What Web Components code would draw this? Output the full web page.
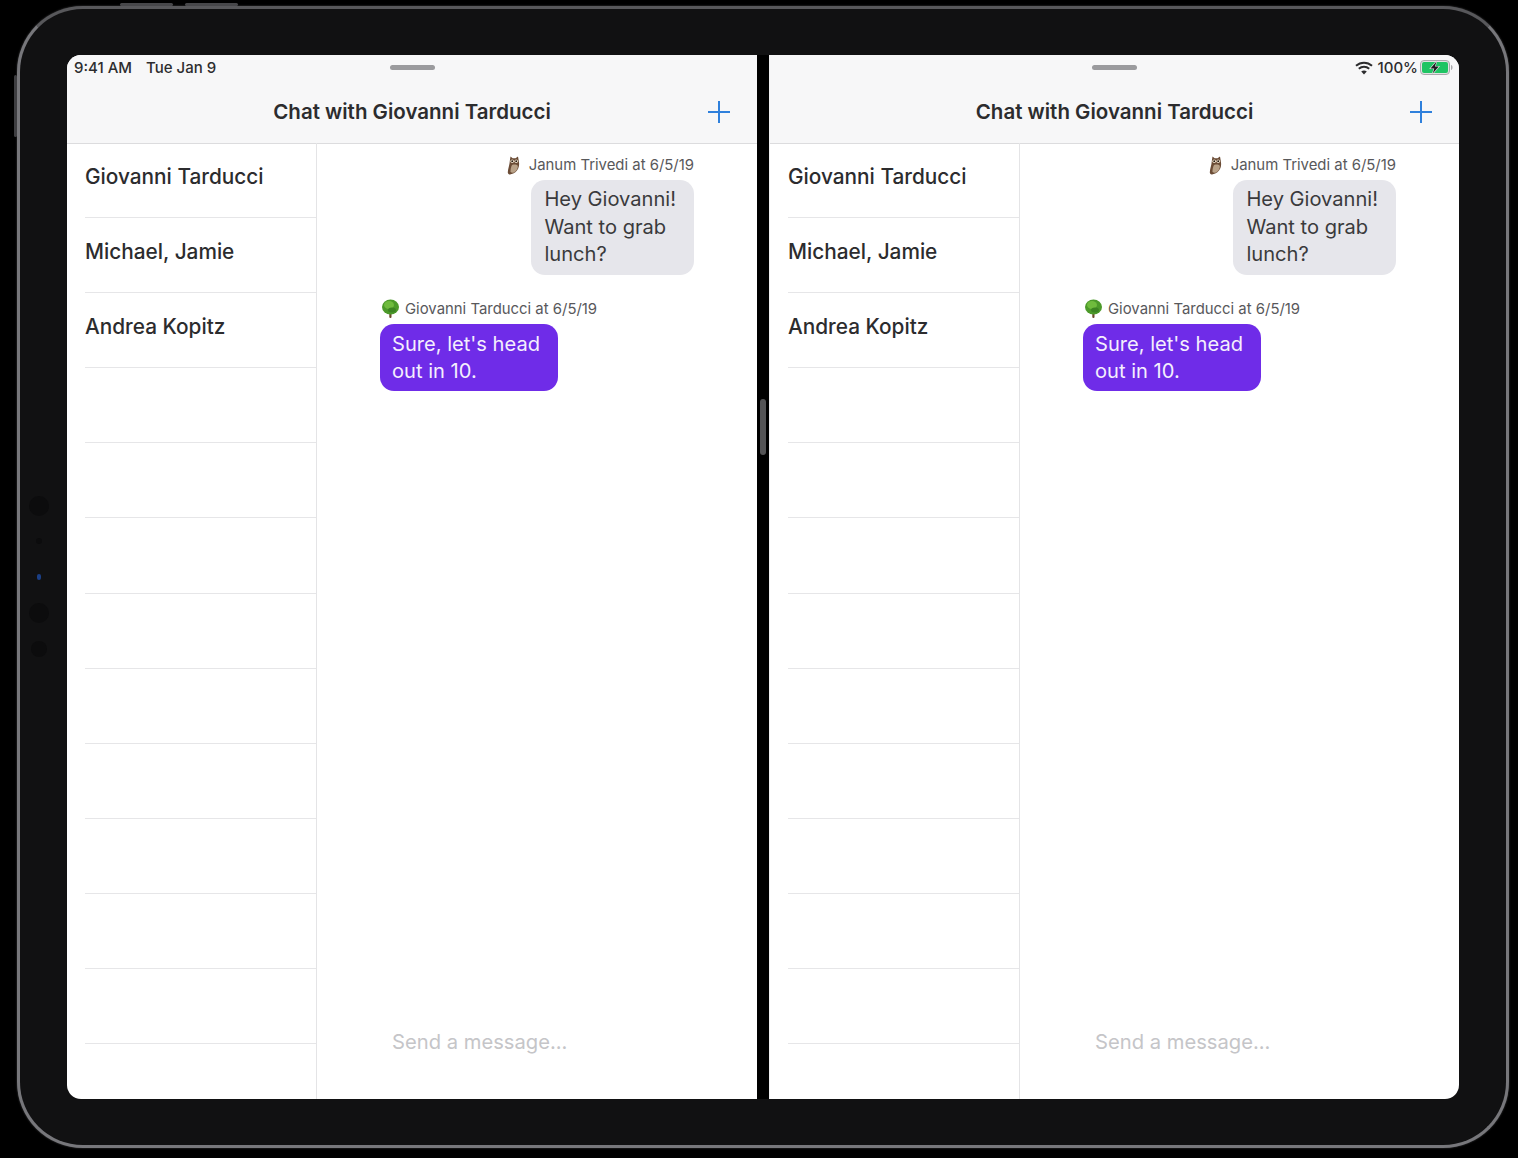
<!DOCTYPE html>
<html>
<head>
<meta charset="utf-8">
<title>Chat split view</title>
<style>
  html, body { margin: 0; height: 100%; background: #000; overflow: hidden; }
  body { padding: 6px 0 0 17px; box-sizing: border-box; font-family: Inter, "Noto Sans", "Liberation Sans", sans-serif; color: #2c2c2e; }
</style>
</head>
<body>
<ipad-frame>
  <chat-pane>
    <span slot="status-left">9:41 AM<span style="margin-left:14px">Tue Jan 9</span></span>
  </chat-pane>
  <chat-pane second>
    <status-icons slot="status-right"></status-icons>
  </chat-pane>
</ipad-frame>

<script>
const OWL = `<svg width="15" height="19" viewBox="0 0 15 19"><path d="M4.500 .5l2.200 1.700h2.800L12 .5l.8 4.500c.6 2.800.4 5.500-.6 7.500-1.300 2.800-3.800 5-7.500 5.800C3 19 1.800 18 1.800 16.300 2 12.500 3.600 9 3.800 5z" fill="#6b4c36"/><path d="M6 9c2-.8 4.500-.6 5.800.7.200 2.600-1 5.200-3.800 6.800-1.500.5-2.700.3-3.500-.4C4.400 13.500 5 11 6 9z" fill="#b9a288"/><circle cx="6.200" cy="5.200" r="1.800" fill="#e8dcc8"/><circle cx="10.200" cy="5.200" r="1.800" fill="#e8dcc8"/><circle cx="6.200" cy="5.200" r=".9" fill="#24170e"/><circle cx="10.200" cy="5.200" r=".9" fill="#24170e"/></svg>`
const TREE = `<svg width="19" height="19" viewBox="0 0 19 19"><rect x="8.300" y="11" width="2.200" height="8" rx="1" fill="#6b4a2a"/><ellipse cx="9.500" cy="8" rx="8.500" ry="7.500" fill="#4c9a2a"/><ellipse cx="8" cy="6" rx="5" ry="4" fill="#6fbb3d"/><ellipse cx="11" cy="11" rx="4" ry="2.500" fill="#3c8422"/></svg>`

class IpadFrame extends HTMLElement {
  connectedCallback() {
    this.attachShadow({ mode: 'open' })
    this.shadowRoot.innerHTML = `
      <style>
        :host {
          display: block;
          position: relative;
          box-sizing: border-box;
          width: 1492px;
          height: 1142px;
          padding: 46px 47px;
          border: 3px solid #77777b;
          border-top-color: #58585b;
          border-radius: 66px;
          background: #111112;
          box-shadow: 0 0 2px rgba(120, 120, 124, .6);
        }
        .screen {
          display: grid;
          grid-template-columns: 690px 690px;
          column-gap: 12px;
          height: 100%;
          background: #000;
          border-radius: 14px;
          overflow: hidden;
        }
        .handle {
          position: absolute;
          left: 740px;
          top: 390px;
          width: 6px;
          height: 56px;
          border-radius: 3px;
          background: #545456;
        }
        .btn { position: absolute; background: #47474a; border-radius: 2px; }
        .top { top: -6px; height: 3px; width: 53px; }
        .side { left: -6px; top: 66px; width: 3px; height: 62px; background: #3e3e41; }
        .dots {
          position: absolute;
          left: 10px;
          top: 487px;
          width: 18px;
          display: flex;
          flex-direction: column;
          align-items: center;
        }
        .dots i { display: block; border-radius: 50%; background: #0c0c0d; }
      </style>
      <span class="btn top" style="left:100px"></span>
      <span class="btn top" style="left:165px"></span>
      <span class="btn side"></span>
      <div class="dots">
        <i style="width:20px;height:20px"></i>
        <i style="width:6px;height:6px;margin-top:22px"></i>
        <i style="width:4px;height:6px;margin-top:30px;background:#1b3f86;border-radius:2px"></i>
        <i style="width:20px;height:20px;margin-top:23px"></i>
        <i style="width:16px;height:16px;margin-top:18px"></i>
      </div>
      <div class="screen"><slot></slot></div>
      <span class="handle"></span>
    `
  }
}

class StatusIcons extends HTMLElement {
  connectedCallback() {
    this.attachShadow({ mode: 'open' })
    this.shadowRoot.innerHTML = `
      <style>
        :host { display: flex; align-items: center; gap: 5px; margin-right: -1px; }
        svg { display: block; }
      </style>
      <svg width="18" height="14" viewBox="0 0 18 14" fill="none" stroke="#2c2c2e" stroke-width="2">
        <path d="M1 4.800C5.600.6 12.400.6 17 4.800"/>
        <path d="M3.800 7.700c3-2.700 7.400-2.700 10.400 0"/>
        <path d="M9 13.500l-2.800-3.100c1.700-1.300 3.900-1.300 5.600 0z" fill="#2c2c2e" stroke="none"/>
      </svg>
      <span>100%</span>
      <svg width="33" height="15" viewBox="0 0 33 15" style="margin-left:-3px">
        <rect x=".5" y=".5" width="29" height="14" rx="3.500" fill="#e2e2e2" stroke="#a9a9ac"/>
        <rect x="2" y="2" width="26" height="11" rx="2" fill="#1fc463"/>
        <path d="M31 5v5c1-.3 1.500-1.200 1.500-2.500S32 5.300 31 5z" fill="#a9a9ac"/>
        <path d="M16.500 1.500L10.500 8.500h3.800l-1.600 5 6-7h-3.800z" fill="#1d1d1f" stroke="#e2e2e2" stroke-width="1.200" paint-order="stroke"/>
      </svg>
    `
  }
}

class ChatPane extends HTMLElement {
  connectedCallback() {
    this.attachShadow({ mode: 'open' })
    this.shadowRoot.innerHTML = `
      <style>
        :host {
          display: flex;
          flex-direction: column;
          min-width: 0;
          background: #fff;
        }
        :host([second]) { border-left: 1px solid #f0f0f1; }
        header {
          background: #f7f7f8;
          border-bottom: 1px solid #dcdcde;
          height: 89px;
          box-sizing: border-box;
        }
        .status {
          display: grid;
          grid-template-columns: 1fr 45px 1fr;
          align-items: center;
          height: 25px;
          padding: 0 7px;
          font-size: 15px;
          font-weight: 500;
          color: #2c2c2e;
        }
        .status .right { display: flex; justify-content: flex-end; }
        .grip { height: 5px; border-radius: 3px; background: #9b9b9e; }
        nav {
          display: grid;
          grid-template-columns: 1fr auto 1fr;
          align-items: center;
          height: 63px;
          padding: 0 27px;
        }
        h1 { margin: 0; font-size: 20.5px; font-weight: 600; color: #2c2c2e; }
        nav svg { justify-self: end; display: block; }
        .body { flex: 1; display: grid; grid-template-columns: 250px 1fr; min-height: 0; }
      </style>
      <header>
        <div class="status">
          <div><slot name="status-left"></slot></div>
          <div class="grip"></div>
          <div class="right"><slot name="status-right"></slot></div>
        </div>
        <nav>
          <span></span>
          <h1>Chat with Giovanni Tarducci</h1>
          <svg width="22" height="22" viewBox="0 0 22 22" stroke="#2f80dc" stroke-width="2" fill="none">
            <path d="M11 0v22M0 11h22"/>
          </svg>
        </nav>
      </header>
      <div class="body">
        <room-list></room-list>
        <message-thread>
          <chat-message side="right" who="Janum Trivedi at 6/5/19" avatar="owl">Hey Giovanni!<br>Want to grab<br>lunch?</chat-message>
          <chat-message side="left" who="Giovanni Tarducci at 6/5/19" avatar="tree">Sure, let's head<br>out in 10.</chat-message>
        </message-thread>
      </div>
    `
  }
}

class RoomList extends HTMLElement {
  connectedCallback() {
    this.attachShadow({ mode: 'open' })
    const names = ['Giovanni Tarducci', 'Michael, Jamie', 'Andrea Kopitz', '', '', '', '', '', '', '', '', '']
    this.shadowRoot.innerHTML = `
      <style>
        :host {
          display: block;
          border-right: 1px solid #e4e4e6;
          padding-left: 18px;
          margin-top: -1px;
          overflow: hidden;
        }
        div {
          box-sizing: border-box;
          height: 75.1px;
          padding-top: 19px;
          line-height: 30px;
          border-bottom: 1px solid #e6e6e8;
          font-size: 20.8px;
          font-weight: 500;
          color: #2c2c2e;
        }
      </style>
      ${names.map(n => `<div>${n}</div>`).join('')}
    `
  }
}

class MessageThread extends HTMLElement {
  connectedCallback() {
    this.attachShadow({ mode: 'open' })
    this.shadowRoot.innerHTML = `
      <style>
        :host {
          display: flex;
          flex-direction: column;
          box-sizing: border-box;
          padding: 11px 63px 43px;
          min-width: 0;
        }
        .list { display: flex; flex-direction: column; gap: 24px; }
        .input {
          margin-top: auto;
          padding-left: 12px;
          line-height: 28px;
          font-size: 20.2px;
          color: #c5c5c8;
        }
      </style>
      <div class="list"><slot></slot></div>
      <div class="input">Send a message...</div>
    `
  }
}

class ChatMessage extends HTMLElement {
  connectedCallback() {
    const right = this.getAttribute('side') === 'right'
    this.attachShadow({ mode: 'open' })
    this.shadowRoot.innerHTML = `
      <style>
        :host { display: flex; flex-direction: column; align-items: ${right ? 'flex-end' : 'flex-start'}; }
        .meta {
          display: flex;
          align-items: center;
          gap: ${right ? 8 : 5}px;
          height: 20px;
          margin-bottom: 5px;
          padding-left: ${right ? 0 : 1}px;
          font-size: 14.9px;
          color: #58585b;
        }
        svg { display: block; }
        .bubble {
          padding: ${right ? '6px 18px 6px 13px' : '7px 18px 5px 12px'};
          border-radius: 14px;
          font-size: 20.1px;
          line-height: 27.5px;
          background: ${right ? '#e6e6eb' : '#6f2ce8'};
          color: ${right ? '#3a3a3c' : '#f4effd'};
        }
      </style>
      <div class="meta">${this.getAttribute('avatar') === 'owl' ? OWL : TREE}<span>${this.getAttribute('who')}</span></div>
      <div class="bubble"><slot></slot></div>
    `
  }
}

customElements.define('status-icons', StatusIcons)
customElements.define('chat-message', ChatMessage)
customElements.define('message-thread', MessageThread)
customElements.define('room-list', RoomList)
customElements.define('chat-pane', ChatPane)
customElements.define('ipad-frame', IpadFrame)
</script>
</body>
</html>
